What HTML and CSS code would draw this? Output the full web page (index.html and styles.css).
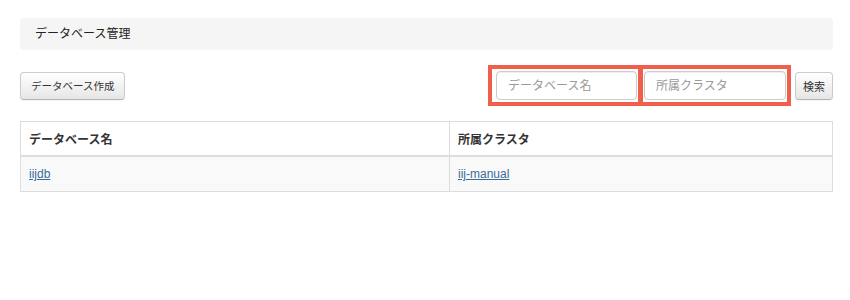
FILE: index.html
```html
<!DOCTYPE html>
<html lang="ja">
<head>
    <meta charset="UTF-8">
    <title>データベース管理</title>
    <link rel="stylesheet" href="styles.css">
</head>
<body>
    <div class="page">
        <div class="page-title">データベース管理</div>

        <div class="toolbar">
            <button class="btn btn-create">データベース作成</button>
            <form class="search-form">
                <span class="mark mark-first"><input type="text" class="search-input" placeholder="データベース名"></span>
                <span class="mark mark-second"><input type="text" class="search-input wide" placeholder="所属クラスタ"></span>
                <button type="button" class="btn btn-search">検索</button>
            </form>
        </div>

        <table class="db-table">
            <thead>
                <tr>
                    <th class="col-name">データベース名</th>
                    <th>所属クラスタ</th>
                </tr>
            </thead>
            <tbody>
                <tr>
                    <td><a href="#">iijdb</a></td>
                    <td><a href="#">iij-manual</a></td>
                </tr>
            </tbody>
        </table>
    </div>
</body>
</html>
```

FILE: styles.css
```css
body {
    margin: 0;
    font-family: "Liberation Sans", "Noto Sans CJK JP", sans-serif;
    font-size: 12px;
    color: #333;
    background-color: #fff;
}

.page {
    padding: 18px 17px 0 20px;
}

.page-title {
    height: 32px;
    line-height: 32px;
    padding-left: 15px;
    background-color: #f5f5f5;
    border-radius: 4px;
    font-size: 12px;
    color: #222;
}

.toolbar {
    display: flex;
    justify-content: space-between;
    align-items: center;
    margin-top: 15px;
}

.btn {
    font-family: "Liberation Sans", "Noto Sans CJK JP", sans-serif;
    font-size: 11px;
    color: #333;
    height: 28px;
    padding: 0 7px;
    border: 1px solid #ccc;
    border-bottom-color: #b3b3b3;
    border-radius: 4px;
    background: linear-gradient(#ffffff, #e6e6e6);
    box-shadow: inset 0 1px 0 rgba(255, 255, 255, 0.2), 0 1px 2px rgba(0, 0, 0, 0.05);
    cursor: pointer;
}

.btn-create {
    font-size: 10.5px;
    padding: 0 10px;
}

.search-form {
    display: flex;
    align-items: center;
    margin: 0;
}

.mark {
    display: flex;
    border: 4px solid #ef5f4b;
}

.mark-first {
    padding: 2px 1px 2px 4px;
}

.mark-second {
    padding: 2px 1px;
    margin-left: -3px;
}

.search-input {
    width: 141px;
    height: 29px;
    box-sizing: border-box;
    padding: 0 11px;
    font-family: "Liberation Sans", "Noto Sans CJK JP", sans-serif;
    font-size: 12px;
    color: #555;
    border: 1px solid #ccc;
    border-radius: 4px;
    box-shadow: inset 0 1px 1px rgba(0, 0, 0, 0.075);
    outline: none;
}

.search-input.wide {
    width: 142px;
}

.search-input::placeholder {
    color: #999;
}

.btn-search {
    margin-left: 4px;
}

.db-table {
    width: 100%;
    margin-top: 15px;
    border-collapse: collapse;
    border: 1px solid #ddd;
}

.db-table th,
.db-table td {
    text-align: left;
    padding: 0 8px;
    border: 1px solid #ddd;
}

.db-table th {
    height: 33px;
    font-weight: bold;
    font-size: 12px;
    color: #333;
    border-bottom: 2px solid #ddd;
}

.db-table .col-name {
    width: 412px;
}

.db-table td {
    height: 34px;
    background-color: #f9f9f9;
}

.db-table a {
    color: #3b6c99;
    text-decoration: underline;
}
```
